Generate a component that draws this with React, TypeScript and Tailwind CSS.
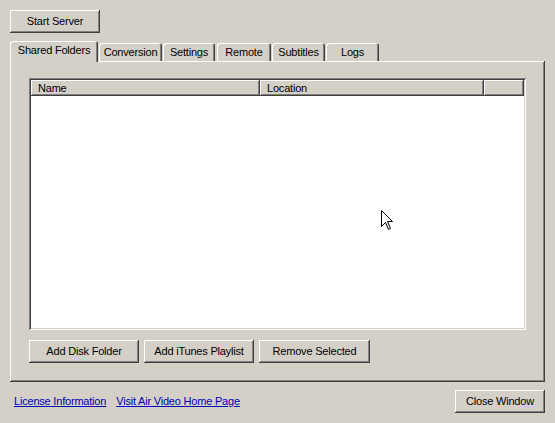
import React from "react";

const raised =
  "shadow-[inset_-1px_-1px_#404040,inset_1px_1px_#ffffff,inset_-2px_-2px_#808080,inset_2px_2px_#d4d0c8]";

function Btn({ label, w }: { label: string; w: string }) {
  return (
    <div
      className={`${w} h-[23px] flex items-center justify-center bg-[#d4d0c8] text-black ${raised}`}
    >
      {label}
    </div>
  );
}

function Tab({ label, w, active }: { label: string; w: string; active?: boolean }) {
  if (active) {
    return (
      <div
        className={`${w} h-[21px] mb-[-1px] relative z-10 bg-[#d4d0c8] rounded-t-[3px] flex items-center justify-center pb-[2px] shadow-[inset_1px_1px_#ffffff,inset_-1px_0_#404040,inset_-2px_0_#808080]`}
      >
        {label}
      </div>
    );
  }
  return (
    <div
      className={`${w} h-[18px] bg-[#d4d0c8] rounded-t-[3px] flex items-center justify-center shadow-[inset_1px_1px_#ffffff,inset_-1px_0_#404040,inset_-2px_0_#808080]`}
    >
      {label}
    </div>
  );
}

export default function App() {
  return (
    <div
      className="relative w-[555px] h-[423px] bg-[#d4d0c8] text-[11px] leading-[13px] tracking-[-0.2px] text-black overflow-hidden flex flex-col"
      style={{ fontFamily: '"Liberation Sans", Arial, sans-serif' }}
    >
      <div className="pl-[10px] pt-[10px]">
        <Btn label="Start Server" w="w-[90px]" />
      </div>

      <div className="ml-[10px] mt-[8px] flex items-end h-[20px]">
        <Tab label="Shared Folders" w="w-[88px]" active />
        <div className="w-[1px]" />
        <Tab label="Conversion" w="w-[63px]" />
        <div className="w-[1px]" />
        <Tab label="Settings" w="w-[52px]" />
        <div className="w-[2px]" />
        <Tab label="Remote" w="w-[54px]" />
        <div className="w-[1px]" />
        <Tab label="Subtitles" w="w-[53px]" />
        <div className="w-[1px]" />
        <Tab label="Logs" w="w-[53px]" />
      </div>

      <div className="ml-[10px] w-[535px] h-[321px] bg-[#d4d0c8] pl-[19px] pt-[17px] shadow-[inset_-1px_-1px_#404040,inset_1px_1px_#ffffff,inset_-2px_-2px_#808080]">
        <div className="w-[497px] h-[252px] p-[2px] bg-white shadow-[inset_1px_1px_#808080,inset_-1px_-1px_#ffffff,inset_2px_2px_#404040,inset_-2px_-2px_#d4d0c8]">
          <div className="flex h-[16px]">
            <div className={`w-[229px] h-full flex items-center pl-[7px] bg-[#d4d0c8] ${raised}`}>Name</div>
            <div className={`w-[224px] h-full flex items-center pl-[7px] bg-[#d4d0c8] ${raised}`}>Location</div>
            <div className={`w-[40px] h-full bg-[#d4d0c8] ${raised}`} />
          </div>
        </div>
        <div className="flex gap-[5px] mt-[10px]">
          <Btn label="Add Disk Folder" w="w-[110px]" />
          <Btn label="Add iTunes Playlist" w="w-[110px]" />
          <Btn label="Remove Selected" w="w-[111px]" />
        </div>
      </div>

      <div className="flex items-center justify-between mt-[8px] pl-[14px] pr-[10px]">
        <div className="flex gap-[10px] text-[#0000b0] underline">
          <span>License Information</span>
          <span>Visit Air Video Home Page</span>
        </div>
        <Btn label="Close Window" w="w-[90px]" />
      </div>

      <svg
        className="absolute left-[381px] top-[210px]"
        width="13"
        height="21"
        viewBox="0 0 13 21"
      >
        <path
          d="M0.5 0.5 L0.5 16.5 L4.5 12.5 L7.5 19.5 L9.5 18.5 L6.5 11.5 L11.5 11.5 Z"
          fill="#ffffff"
          stroke="#000000"
          strokeWidth="1"
        />
      </svg>
    </div>
  );
}
